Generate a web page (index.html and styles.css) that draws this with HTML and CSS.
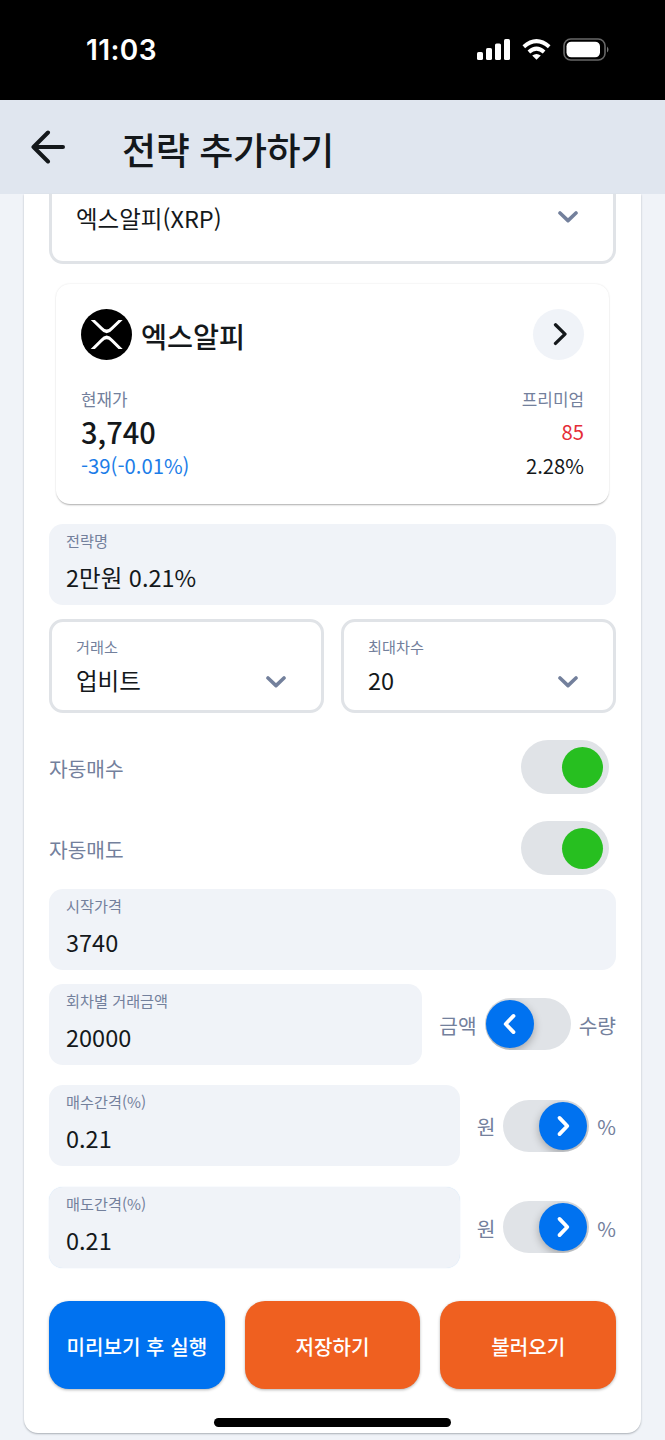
FILE: index.html
```html
<!DOCTYPE html>
<html lang="ko">
<head>
<meta charset="utf-8">
<title>전략 추가하기</title>
<link rel="stylesheet" href="styles.css">
</head>
<body>
<div class="screen">
  <div class="status-bar">
    <span class="clock">11:03</span>
    <svg class="status-icons" width="134" height="24" viewBox="0 0 134 24">
      <g fill="#fff">
        <rect x="1" y="14" width="6" height="8" rx="1.6"/>
        <rect x="10" y="10" width="6" height="12" rx="1.6"/>
        <rect x="19" y="5.5" width="6" height="16.500" rx="1.600"/>
        <rect x="28" y="1" width="6" height="21" rx="1.600"/>
        <path d="M60.500 21.800 56.200 17.600Q60.500 14.500 64.800 17.600Z"/>
        <rect x="90.500" y="3.700" width="33.500" height="15.600" rx="4.800"/>
      </g>
      <g fill="none" stroke="#fff" stroke-width="4">
        <path d="M47.800 8.700Q60.500-2.300 73.200 8.700"/>
        <path d="M52.900 14Q60.500 7.400 68.100 14"/>
      </g>
      <rect x="88" y="1" width="41" height="21" rx="6.800" fill="none" stroke="#686868" stroke-width="1.600"/>
      <path d="M131 8.400Q134 11.500 131 14.600Z" fill="#777"/>
    </svg>
  </div>

  <header class="app-bar">
    <svg class="back" width="34" height="34" viewBox="0 0 34 34"><path d="M32 17H2.500M17 2.500 2.500 17 17 31.500"/></svg>
    <h1 class="title">전략 추가하기</h1>
  </header>

  <main class="content">
    <section class="panel">
      <div class="select select-coin">
        <span class="value">엑스알피(XRP)</span>
        <svg class="chevron" width="20" height="12" viewBox="0 0 20 12"><path d="M2 2 10 9.600 18 2"/></svg>
      </div>

      <article class="coin-card">
        <div class="coin-head">
          <svg class="coin-logo" width="51" height="51" viewBox="0 0 51 51">
            <circle cx="25.500" cy="25.500" r="25.500" fill="#000"/>
            <g fill="#fff">
              <path d="M9.700 10.900H13.900L21.500 18.300Q25.700 22.800 29.900 18.300L37.500 10.900H41.700L31.900 20.600Q25.700 28 19.500 20.600Z"/>
              <path d="M9.700 39.900H13.900L21.500 32.500Q25.700 28 29.900 32.500L37.500 39.900H41.700L31.900 30.200Q25.700 22.800 19.500 30.200Z"/>
            </g>
          </svg>
          <span class="coin-name">엑스알피</span>
          <button class="go" aria-label="상세">
            <svg width="16" height="26" viewBox="0 0 16 26"><path d="M4.500 2.800 14 12.100 4.500 21.400"/></svg>
          </button>
        </div>
        <div class="quote">
          <div class="quote-col">
            <span class="quote-label">현재가</span>
            <span class="price">3,740</span>
            <span class="quote-num down">-39(-0.01%)</span>
          </div>
          <div class="quote-col quote-right">
            <span class="quote-label">프리미엄</span>
            <span class="quote-num premium">85</span>
            <span class="quote-num">2.28%</span>
          </div>
        </div>
      </article>

      <div class="field">
        <span class="label">전략명</span>
        <span class="value">2만원 0.21%</span>
      </div>

      <div class="select-row">
        <div class="select">
          <div class="select-text"><span class="label">거래소</span><span class="value">업비트</span></div>
          <svg class="chevron" width="20" height="12" viewBox="0 0 20 12"><path d="M2 2 10 9.600 18 2"/></svg>
        </div>
        <div class="select">
          <div class="select-text"><span class="label">최대차수</span><span class="value">20</span></div>
          <svg class="chevron" width="20" height="12" viewBox="0 0 20 12"><path d="M2 2 10 9.600 18 2"/></svg>
        </div>
      </div>

      <div class="switch-row"><span class="caption">자동매수</span><span class="switch"><i class="knob"></i></span></div>
      <div class="switch-row"><span class="caption">자동매도</span><span class="switch"><i class="knob"></i></span></div>

      <div class="field field-start">
        <span class="label">시작가격</span>
        <span class="value">3740</span>
      </div>

      <div class="unit-row unit-row-amount">
        <div class="field"><span class="label">회차별 거래금액</span><span class="value">20000</span></div>
        <span class="caption">금액</span>
        <span class="toggle"><i class="thumb"><svg width="14" height="22" viewBox="0 0 14 22"><path d="M10.500 2.900 2.700 11 10.500 19.100"/></svg></i></span>
        <span class="caption caption-end">수량</span>
      </div>
      <div class="unit-row">
        <div class="field"><span class="label">매수간격(%)</span><span class="value">0.21</span></div>
        <span class="caption">원</span>
        <span class="toggle toggle-on"><i class="thumb"><svg width="14" height="22" viewBox="0 0 14 22"><path d="M3.500 2.900 11.300 11 3.500 19.100"/></svg></i></span>
        <span class="caption caption-end">%</span>
      </div>
      <div class="unit-row unit-row-sell">
        <div class="field field-edge"><span class="label">매도간격(%)</span><span class="value">0.21</span></div>
        <span class="caption">원</span>
        <span class="toggle toggle-on"><i class="thumb"><svg width="14" height="22" viewBox="0 0 14 22"><path d="M3.500 2.900 11.300 11 3.500 19.100"/></svg></i></span>
        <span class="caption caption-end">%</span>
      </div>

      <div class="actions">
        <button class="btn btn-primary">미리보기 후 실행</button>
        <button class="btn">저장하기</button>
        <button class="btn">불러오기</button>
      </div>
    </section>
  </main>
  <div class="home-indicator"></div>
</div>
</body>
</html>
```
FILE: styles.css
```css
* { box-sizing: border-box; }
body {
  margin: 0;
  background: #f0f3f8;
  color: #14181b;
  font-family: "Noto Sans CJK KR", sans-serif;
}
.screen {
  position: relative;
  width: 665px;
  height: 1440px;
  overflow: hidden;
}
button { border: 0; padding: 0; font-family: inherit; }

.status-bar {
  display: flex;
  justify-content: space-between;
  height: 100px;
  padding: 38px 55px 0 86px;
  background: #000;
}
.clock {
  color: #fff;
  font: 600 28px/24px Inter, sans-serif;
  letter-spacing: 0.4px;
}

.app-bar {
  display: flex;
  align-items: center;
  gap: 57px;
  height: 94px;
  padding-left: 31px;
  background: #e0e6ef;
}
.back path { fill: none; stroke: #14181b; stroke-width: 4; stroke-linecap: round; stroke-linejoin: round; }
.title {
  margin: 3px 0 0;
  font-size: 37px;
  font-weight: 500;
  line-height: 54px;
  letter-spacing: -0.4px;
}

.content { padding: 0 24px; }
.panel {
  height: 1239px;
  padding: 0 25px;
  background: #fff;
  border-radius: 0 0 14px 14px;
  box-shadow: 0 1px 2px #a9aeb5;
}

.label { color: #73809c; font-size: 15.2px; line-height: 22px; }
.value { font-size: 23.5px; line-height: 34px; }
.caption { color: #73809c; font-size: 20.3px; line-height: 30px; }

.select {
  display: flex;
  justify-content: space-between;
  height: 94px;
  border: 3px solid #e0e3e7;
  border-radius: 14px;
  padding: 13px 35px 0 24px;
}
.select-coin {
  height: 70px;
  border-top: 0;
  border-radius: 0 0 14px 14px;
  padding-top: 7px;
}
.select-coin .chevron { margin-top: 10px; }
.select-text { display: flex; flex-direction: column; }
.select-text .value { margin-top: 6px; }
.chevron { margin-top: 41px; }
.chevron path { fill: none; stroke: #73809c; stroke-width: 3.6; stroke-linecap: round; stroke-linejoin: round; }

.coin-card {
  height: 220px;
  margin: 20px 7px 0;
  padding: 25px 25px 0;
  border-radius: 14px;
  box-shadow: 0 2px 2px -1px rgba(0, 0, 0, .3), 0 0 2px rgba(0, 0, 0, .12);
}
.coin-head { display: flex; align-items: center; height: 51px; }
.coin-name { margin: 3px auto 0 9px; font-size: 28.3px; font-weight: 500; line-height: 40px; }
.go {
  display: flex;
  align-items: center;
  justify-content: center;
  width: 51px;
  height: 51px;
  border-radius: 50%;
  background: #f0f3f8;
}
.go path { fill: none; stroke: #14181b; stroke-width: 3.3; stroke-linecap: round; stroke-linejoin: round; }
.quote { display: flex; justify-content: space-between; margin-top: 26px; }
.quote-col { display: flex; flex-direction: column; }
.quote-right { align-items: flex-end; }
.quote-label { color: #73809c; font-size: 16.9px; line-height: 25px; }
.price { margin-top: -1px; font-size: 29px; font-weight: 500; line-height: 42px; }
.quote-num { font-size: 20.3px; line-height: 25px; }
.down { margin-top: 1px; color: #1c7de8; }
.premium { margin: -1px 0 1px; line-height: 42px; color: #e52d38; }

.field {
  display: flex;
  flex-direction: column;
  height: 81px;
  padding: 5px 17px 0;
  border-radius: 14px;
  background: #f0f3f8;
}
.field .value { margin-top: 9px; }
.coin-card + .field { margin-top: 20px; }

.select-row { display: grid; grid-template-columns: 1fr 1fr; gap: 17px; margin: 14px 0 27px; }

.switch-row { display: flex; justify-content: space-between; height: 54px; margin-bottom: 27px; padding-right: 7px; }
.switch-row .caption { margin-top: 13px; }
.switch { width: 88px; height: 54px; padding: 7px 0 0 40.5px; border-radius: 27px; background: #e0e3e7; }
.knob { display: block; width: 41px; height: 41px; border-radius: 50%; background: #27bf20; }
.field-start { margin-top: -13px; }

.unit-row { display: flex; margin-top: 20px; }
.unit-row-amount { margin-top: 14px; }
.unit-row .field { flex: 1; margin-right: 17px; }
.unit-row .caption { margin-top: 26px; }
.unit-row-sell { margin-top: 20.5px; }
.field-edge { box-shadow: 0 0 1px #bed8f3; }
.toggle { width: 86px; height: 52px; margin: 14px 8px 0; padding: 2px 1px; border-radius: 26px; background: #e0e3e7; overflow: hidden; }
.toggle-on { margin-top: 14.500px; padding-left: 36px; }
.unit-row .toggle-on + .caption-end { margin-left: 0; }
.thumb {
  display: flex;
  align-items: center;
  justify-content: center;
  width: 48px;
  height: 48px;
  border-radius: 50%;
  background: #0072f0;
  box-shadow: 0 3px 9px rgba(0, 0, 0, .28);
}
.thumb path { fill: none; stroke: #fff; stroke-width: 3.8; stroke-linecap: round; stroke-linejoin: round; }

.actions { display: grid; grid-template-columns: repeat(3, 1fr); gap: 20px; margin-top: 33.5px; }
.btn {
  height: 88px;
  padding-top: 2px;
  border-radius: 20px;
  background: #ef6020;
  box-shadow: 0 1px 3px rgba(0, 0, 0, .3);
  color: #fff;
  font-size: 20.1px;
  font-weight: 500;
}
.btn-primary { background: #0072f0; }

.home-indicator {
  position: absolute;
  left: 214px;
  bottom: 13.5px;
  width: 237px;
  height: 9px;
  border-radius: 5px;
  background: #000;
}
```
